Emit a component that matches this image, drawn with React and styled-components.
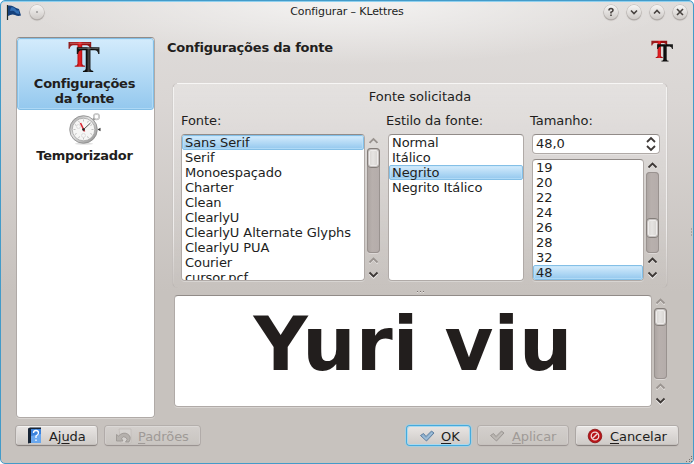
import React from 'react';
import styled, { createGlobalStyle, css } from 'styled-components';

const Global = createGlobalStyle`
  * { box-sizing: border-box; }
  html, body { margin: 0; background: #fff; overflow: hidden; }
  body { font: 13px/15px "DejaVu Sans", sans-serif; letter-spacing: -.07px; color: #221e1d; }
`;

const Window = styled.div`
  width: 694px;
  height: 464px;
  display: flex;
  flex-direction: column;
  border: 1px solid #439bc9;
  border-radius: 5px;
  box-shadow: inset 0 1px 0 #8fd0ef;
  background:
    radial-gradient(ellipse 330px 64px at 50% 0, rgba(255,255,255,.65), rgba(255,255,255,0)),
    linear-gradient(#e0dddb 0, #dad6d4 100px, #c7c2be 290px, #c7c2be 100%);
  position: relative;
  overflow: hidden;
`;

const TitleBar = styled.div`
  height: 22px;
  display: flex;
  align-items: center;
  padding: 0 6px 0 5px;
  font-size: 11px;
  letter-spacing: -.12px;
`;
const TitleText = styled.div`
  flex: 1;
  text-align: center;
  padding: 0 60px 2px 106px;
  white-space: nowrap;
`;
const TitleButtons = styled.div`
  display: flex;
  gap: 9px;
`;
const RoundButton = styled.div`
  width: 14px;
  height: 14px;
  margin-bottom: 1px;
  border-radius: 50%;
  background: linear-gradient(#f6f5f4, #cfcbc8);
  box-shadow: 0 0 0 .5px #bbb6b3, 0 1px 1px .5px #a9a4a1;
  svg { display: block; }
`;
const FlagSlot = styled.div`
  width: 16px;
  height: 17px;
  margin-right: 8px;
  margin-bottom: 2px;
`;

const Body = styled.div`
  display: flex;
  height: 381px;
  margin-top: 14px;
  padding-left: 15px;
  gap: 12px;
`;

const sunken = css`
  background: #fff;
  border: 1px solid #b0aaa7;
  border-top-color: #918b88;
  border-radius: 4px;
  box-shadow: 0 1px 0 rgba(255,255,255,.3);
`;
const selected = css`
  background: linear-gradient(#d3ebfc, #94c8ee);
  border-color: #84bfe6;
  box-shadow: inset 0 0 0 1px rgba(190,226,250,.6);
`;

const Sidebar = styled.div`
  ${sunken}
  width: 139px;
  flex: none;
  overflow: hidden;
`;
const SideItem = styled.div`
  height: ${p => p.$h}px;
  border: 1px solid transparent;
  border-radius: 3px;
  text-align: center;
  font-weight: bold;
  letter-spacing: -.27px;
  padding-top: ${p => p.$top}px;
  padding-right: 2px;
  ${p => p.$on && selected}
  svg { display: block; margin: 0 auto ${p => p.$gap}px; }
`;

const Content = styled.div`
  width: 512px;
  display: flex;
  flex-direction: column;
`;
const Header = styled.div`
  height: 46px;
  display: flex;
  justify-content: space-between;
  padding: 3px 5px 0 0;
  font-weight: bold;
  letter-spacing: -.22px;
`;
const Group = styled.div`
  width: 494px;
  height: 205px;
  margin-left: 6px;
  border: 1px solid transparent;
  border-radius: 5px;
  background:
    linear-gradient(#f7f6f5, #f7f6f5) 4px 0 / 486px 1px no-repeat border-box,
    linear-gradient(#f4f3f2, #eeeceb 70%, rgba(220,216,214,0)) 0 4px / 1px 201px no-repeat border-box,
    linear-gradient(#f4f3f2, #eeeceb 70%, rgba(220,216,214,0)) 493px 4px / 1px 201px no-repeat border-box,
    linear-gradient(rgba(255,255,255,.25), rgba(255,255,255,0)) padding-box;
  box-shadow: -1px 0 1px -1px #9d9794, 1px 0 1px -1px #9d9794;
  padding: 5px 6px 0 7px;
`;
const GroupTitle = styled.div`
  text-align: center;
  padding-right: 1px;
  letter-spacing: 0;
`;
const Columns = styled.div`
  display: flex;
  margin-top: 9px;
`;
const Column = styled.div`
  width: ${p => p.$w}px;
  margin-right: ${p => p.$mr || 0}px;
`;
const Label = styled.div`
  height: 21px;
  white-space: nowrap;
  letter-spacing: -.05px;
  margin-left: ${p => p.$ml || 0}px;
`;
const ListRow = styled.div`
  display: flex;
  gap: 2px;
`;
const List = styled.div`
  ${sunken}
  flex: 1;
  height: ${p => p.$h}px;
  overflow: hidden;
`;
const Item = styled.div`
  height: 15px;
  line-height: 13px;
  padding: 0 2px;
  border: 1px solid transparent;
  border-radius: 2px;
  white-space: nowrap;
  ${p => p.$on && selected}
`;
const Spin = styled.div`
  ${sunken}
  height: 20px;
  margin-bottom: 5px;
  padding: 0 2px 1px 3px;
  display: flex;
  align-items: center;
  justify-content: space-between;
`;

const Scroll = styled.div`
  width: 14px;
  display: flex;
  flex-direction: column;
  align-items: flex-start;
  svg { display: block; flex: none; }
`;
const Groove = styled.div`
  width: 13px;
  height: ${p => p.$h}px;
  padding-top: ${p => p.$top || 0}px;
  border-radius: 4px;
  background: linear-gradient(90deg, #aaa3a0, #b8b0ad 40%, #b4acaa);
  box-shadow: inset 0 0 0 1px #99928f, 0 1px 0 #ddd9d7;
`;
const Handle = styled.div`
  height: ${p => p.$h}px;
  border: 1px solid #837d79;
  outline: 1px solid rgba(125,118,114,.35);
  outline-offset: -2px;
  border-radius: 4px;
  background: linear-gradient(90deg, #d3d0cd, #e6e4e2 45%, #d3d0cd);
  box-shadow: inset 0 0 0 2px #eeeceb;
`;

const Grip = styled.div`
  height: 7px;
  display: flex;
  justify-content: center;
  align-items: center;
  gap: 2px;
  padding-right: 6px;
`;
const Dot = styled.i`
  width: 1px;
  height: 1px;
  background: #77716e;
  box-shadow: 0 1px 0 #e8e5e3;
`;
const PreviewRow = styled.div`
  display: flex;
  gap: 2px;
  margin-left: 7px;
  width: 494px;
`;
const Preview = styled.div`
  ${sunken}
  width: 478px;
  height: 112px;
  text-align: center;
  font: bold 75px/96px "DejaVu Sans", sans-serif;
  letter-spacing: 0;
  white-space: nowrap;
`;

const Footer = styled.div`
  display: flex;
  align-items: center;
  gap: 8px;
  margin-top: 8px;
  padding: 0 15px;
`;
const Spacer = styled.div`
  flex: 1;
`;
const Button = styled.div`
  width: ${p => p.$w}px;
  height: 19px;
  display: flex;
  align-items: center;
  padding-left: ${p => p.$pl || 10}px;
  gap: ${p => p.$gap || 6}px;
  border-radius: 3px;
  background: linear-gradient(#e7e4e2, #cfcbc8);
  border: 1px solid;
  border-color: #f3f2f1 #dedbd9 #c5c0bd;
  box-shadow: 0 1px 1px #847e7b, 0 0 0 1px #b1aca9;
  white-space: nowrap;
  svg { flex: none; }
  span { padding-top: 1px; }
  ${p => p.$default && css`
    border-color: #a9d9ef;
    box-shadow: 0 0 0 1px #45aadd, 0 0 1px 2px #a4cfe1;
  `}
  ${p => p.$off && css`
    color: #9f9a97;
    background: linear-gradient(#d3cfcc, #c9c5c1);
    border-color: #dcd9d7 #d3cfcd #c6c1be;
    box-shadow: 0 1px 1px #98928f, 0 0 0 1px #b4afac;
  `}
`;
const Mnemonic = styled.span`
  text-decoration: underline;
  text-underline-offset: 2px;
  text-decoration-thickness: 1px;
  text-decoration-skip-ink: none;
`;
const ResizeGrip = styled.svg`
  position: absolute;
  right: 0;
  bottom: 0;
`;
const EdgeDots = styled.svg`
  position: absolute;
  right: 0;
  top: 227px;
`;

const T_PATH = 'M0 0H22V6.500H20.800Q20.300 3 17.500 3H13.300V21Q13.300 22.800 16 23V24H6V23Q8.700 22.800 8.700 21V3H4.500Q1.700 3 1.200 6.500H0Z';

function FontIcon({ size, flat }) {
  const id = flat ? 'flat' : 'soft';
  return (
    <svg width={size} height={size} viewBox="0 0 32 32">
      <defs>
        <linearGradient id={id + 'r'} x1="0" x2="1">
          <stop offset="0" stopColor="#8e2020" />
          <stop offset=".4" stopColor="#b31317" />
          <stop offset=".5" stopColor="#ee2226" />
          <stop offset=".62" stopColor="#a50a0e" />
          <stop offset="1" stopColor="#8b1717" />
        </linearGradient>
        <linearGradient id={id + 'k'} x1="0" x2="1">
          <stop offset="0" stopColor="#161616" />
          <stop offset=".42" stopColor="#080808" />
          <stop offset=".52" stopColor={flat ? '#111' : '#444'} />
          <stop offset=".65" stopColor="#080808" />
          <stop offset="1" stopColor="#222" />
        </linearGradient>
      </defs>
      <path transform="translate(.5 1)" d={T_PATH} fill={`url(#${id}r)`} />
      {!flat && <path d="M2 2.200H21.500" stroke="#dd8f90" strokeWidth=".8" opacity=".7" />}
      <path transform="translate(8.500 6)" d={T_PATH} fill={`url(#${id}k)`} />
      {!flat && <path d="M10 7.200H29.500" stroke="#999" strokeWidth=".7" opacity=".7" />}
    </svg>
  );
}

function ClockIcon() {
  const ticks = Array.from({ length: 12 }, (_, i) => i * 30);
  return (
    <svg width="32" height="32" viewBox="0 0 32 32">
      <defs>
        <linearGradient id="rim" x1="0" y1="0" x2="1" y2="1">
          <stop offset="0" stopColor="#999" />
          <stop offset=".4" stopColor="#e4e4e4" />
          <stop offset="1" stopColor="#888" />
        </linearGradient>
      </defs>
      <ellipse cx="15" cy="30.800" rx="9" ry="1" fill="#e2e2e2" />
      <circle cx="27.500" cy="3.800" r="2.700" fill="none" stroke="#aaa" strokeWidth="1.500" />
      <circle cx="27.500" cy="3.800" r="2.700" fill="none" stroke="#eee" strokeWidth=".6" />
      <path d="M23 8l2.500-2.500" stroke="#999" strokeWidth="2" />
      <path d="M28.500 16.500l3-1.800v3.600z" fill="#333" />
      <circle cx="14.500" cy="16.500" r="13.800" fill="url(#rim)" stroke="#888" strokeWidth=".8" />
      <circle cx="14.500" cy="16.500" r="11.300" fill="#f6f6f5" stroke="#999" strokeWidth=".7" />
      {ticks.map(a => (
        <path key={a} d="M14.500 6.500v2" stroke="#aaa" strokeWidth=".7" transform={`rotate(${a} 14.5 16.5)`} />
      ))}
      <circle cx="9.500" cy="13.500" r="2" fill="none" stroke="#ddd" />
      <circle cx="14.500" cy="22.500" r="2" fill="none" stroke="#ddd" />
      <path d="M14.500 16.500l7-6.500" stroke="#555" strokeWidth="1" />
      <path d="M15.500 18.500L11.500 10" stroke="#d92532" strokeWidth="1.600" />
      <circle cx="14.500" cy="16.500" r="1.300" fill="#222" />
    </svg>
  );
}

function Chevron({ down, dim, h }) {
  const c = dim ? '#9a9490' : '#3d3836';
  return (
    <svg width="14" height={h} viewBox={`0 ${-h / 2} 14 ${h}`}>
      <path d={down ? 'M2.500 0l4 4 4-4' : 'M2.500 3l4-4 4 4'} fill="none" stroke="#f0eeed" strokeWidth="1.500" />
      <path d={down ? 'M2.500 -1.500l4 4 4-4' : 'M2.500 2l4-4 4 4'} fill="none" stroke={c} strokeWidth="1.800" />
    </svg>
  );
}

function ScrollBar({ lead, groove, offset, handle, active }) {
  return (
    <Scroll>
      <Chevron dim={!active} h={lead} />
      <Groove $h={groove} $top={offset}><Handle $h={handle} /></Groove>
      <Chevron dim={!active} h={15} />
      <Chevron down h={12} />
    </Scroll>
  );
}

function CheckIcon({ off }) {
  return (
    <svg width="16" height="16" viewBox="0 0 16 16">
      <path d="M1.500 7.500L4.500 5.500 7 8.500 12.500 3 15 5 7.500 13Z" fill={off ? '#b7b3af' : '#8fb2d0'} stroke={off ? '#979390' : '#56779a'} strokeWidth=".9" strokeLinejoin="round" />
      <path d="M3.500 8l3.700 3.300L13 5" fill="none" stroke={off ? '#c4c0bd' : '#abc8e0'} strokeWidth=".8" />
    </svg>
  );
}

const fonts = ['Sans Serif', 'Serif', 'Monoespaçado', 'Charter', 'Clean', 'ClearlyU', 'ClearlyU Alternate Glyphs', 'ClearlyU PUA', 'Courier', 'cursor.pcf'];
const styles = ['Normal', 'Itálico', 'Negrito', 'Negrito Itálico'];
const sizes = ['19', '20', '22', '24', '26', '28', '32', '48'];

const Items = ({ values, value }) => values.map(v => <Item key={v} $on={v === value}>{v}</Item>);

const glyphs = [
  'M5 5.500Q5 3.500 7 3.500T9 5.300Q9 6.500 7 7.300V8.500M7 9.500V11',
  'M4 5.500l3 3 3-3',
  'M4 8.500l3-3 3 3',
  'M4 4l6 6M10 4l-6 6',
];

export default function App() {
  return (
    <>
      <Global />
      <Window>
        <TitleBar>
          <FlagSlot>
            <svg width="16" height="17" viewBox="0 0 16 17">
              <path d="M1.500 2V17" stroke="#222b25" strokeWidth="1.200" />
              <path d="M2 2.500Q5 2 7.500 3.500T13 6L15 12.500Q12 13.500 9 12T2 13Z" fill="#15417c" />
              <path d="M5 4.500Q8 3.500 9.500 6T12.500 7L13.500 11Q10 11 9 9T4 8Z" fill="#3470b5" />
            </svg>
          </FlagSlot>
          <RoundButton>
            <svg width="14" height="14"><circle cx="7" cy="7" r=".8" fill="#666" /></svg>
          </RoundButton>
          <TitleText>Configurar – KLettres</TitleText>
          <TitleButtons>
            {glyphs.map(d => (
              <RoundButton key={d}>
                <svg width="14" height="14"><path d={d} fill="none" stroke="#47423f" strokeWidth="1.600" /></svg>
              </RoundButton>
            ))}
          </TitleButtons>
        </TitleBar>

        <Body>
          <Sidebar>
            <SideItem $on $h={72} $top={2} $gap={2}>
              <FontIcon size={33} />
              Configurações<br />da fonte
            </SideItem>
            <SideItem $h={60} $top={2} $gap={3}>
              <ClockIcon />
              Temporizador
            </SideItem>
          </Sidebar>

          <Content>
            <Header>
              <span>Configurações da fonte</span>
              <FontIcon size={23} flat />
            </Header>
            <Group>
              <GroupTitle>Fonte solicitada</GroupTitle>
              <Columns>
                <Column $w={200} $mr={7}>
                  <Label>Fonte:</Label>
                  <ListRow>
                    <List $h={147}><Items values={fonts} value="Sans Serif" /></List>
                    <ScrollBar lead={14} groove={105} offset={0} handle={20} />
                  </ListRow>
                </Column>
                <Column $w={136} $mr={8}>
                  <Label $ml={-2}>Estilo da fonte:</Label>
                  <ListRow>
                    <List $h={147}><Items values={styles} value="Negrito" /></List>
                  </ListRow>
                </Column>
                <Column $w={128}>
                  <Label $ml={-2}>Tamanho:</Label>
                  <Spin>
                    48,0
                    <svg width="12" height="16" viewBox="0 0 12 16">
                      <path d="M2 6l4-4 4 4M2 10l4 4 4-4" fill="none" stroke="#3d3836" strokeWidth="1.800" />
                    </svg>
                  </Spin>
                  <ListRow>
                    <List $h={122}><Items values={sizes} value="48" /></List>
                    <ScrollBar active lead={13} groove={81} offset={46} handle={20} />
                  </ListRow>
                </Column>
              </Columns>
            </Group>
            <Grip><Dot /><Dot /><Dot /></Grip>
            <PreviewRow>
              <Preview>Yuri viu</Preview>
              <ScrollBar lead={13} groove={71} offset={0} handle={18} />
            </PreviewRow>
          </Content>
        </Body>

        <Footer>
          <Button $w={81}>
            <svg width="16" height="17" viewBox="0 0 16 17">
              <path d="M1 1.500L3 .5H14V16H3L1 16.500Z" fill="#182536" />
              <path d="M4 2H14V16H4Z" fill="#3c83dc" />
              <path d="M4 9L14 7V16H4Z" fill="#69a7ee" />
              <path d="M6.500 6Q6.500 3.500 9 3.500T11.500 6Q11.500 7.500 9 9V11M9 12.500V14" fill="none" stroke="#fff" strokeWidth="1.300" />
            </svg>
            <span>Aj<Mnemonic>u</Mnemonic>da</span>
          </Button>
          <Button $w={95} $off>
            <svg width="16" height="16" viewBox="0 0 16 16">
              <path d="M3 1H15V15H5Z" fill="#d6d3d0" stroke="#bcb7b4" strokeWidth=".6" />
              <path d="M.5 6.500L2.500 8Q7 3.500 11.500 6T13 14H9.500Q12.500 11.500 10 9.500T5.500 10.500L7 13H.5Z" fill="#b5b1ad" stroke="#98938f" strokeWidth=".8" />
            </svg>
            <span><Mnemonic>P</Mnemonic>adrões</span>
          </Button>
          <Spacer />
          <Button $w={63} $default $gap={6} $pl={11}>
            <CheckIcon /><span><Mnemonic>O</Mnemonic>K</span>
          </Button>
          <Button $w={90} $off $gap={7} $pl={10}>
            <CheckIcon off /><span><Mnemonic>A</Mnemonic>plicar</span>
          </Button>
          <Button $w={102} $pl={10} $gap={7}>
            <svg width="16" height="16" viewBox="0 0 16 16">
              <circle cx="8" cy="8" r="6.800" fill="#b91519" stroke="#861013" strokeWidth=".8" />
              <circle cx="8" cy="8" r="3.800" fill="none" stroke="#f0dada" strokeWidth="1.300" />
              <path d="M5.400 10.600L10.600 5.400" stroke="#f0dada" strokeWidth="1.400" />
            </svg>
            <span><Mnemonic>C</Mnemonic>ancelar</span>
          </Button>
        </Footer>
        <EdgeDots width="3" height="10">
          <path d="M1 1h1M1 4h1M1 7h1" stroke="#857f7b" />
        </EdgeDots>
        <ResizeGrip width="8" height="8">
          <path d="M1 6.500h1M4 6.500h1M6 3.500h1M4 4.500h1M6 1.500h1M6 6.500h1" stroke="#77716d" />
        </ResizeGrip>
      </Window>
    </>
  );
}
